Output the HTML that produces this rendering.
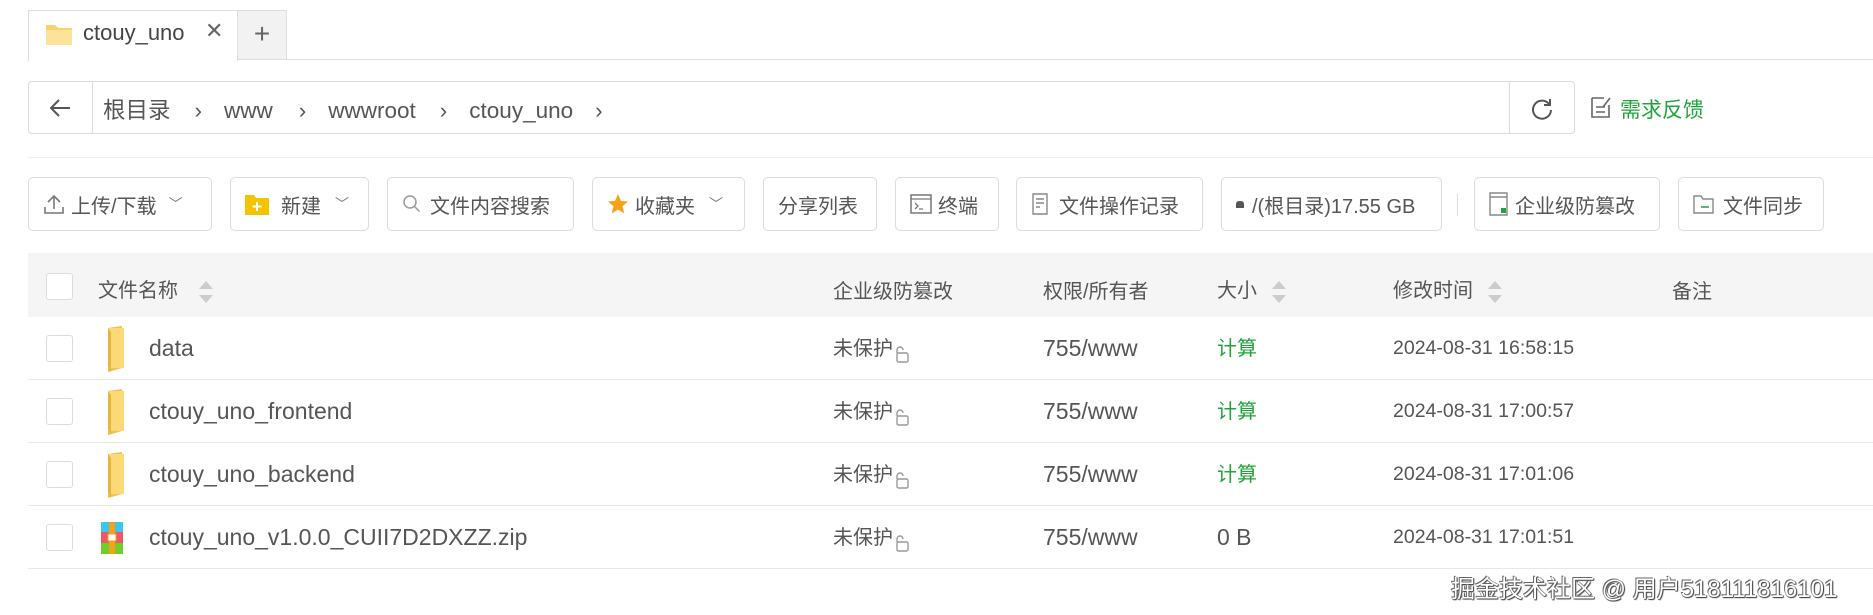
<!DOCTYPE html>
<html><head><meta charset="utf-8"><style>
*{box-sizing:border-box;margin:0;padding:0}
body{width:1873px;height:615px;background:#fff;position:relative;overflow:hidden;font-family:"Liberation Sans","Noto Sans CJK SC",sans-serif;color:#555;font-size:20px}
.a{position:absolute}
.btn{position:absolute;top:177px;height:54px;border:1px solid #dcdcdc;border-radius:5px;display:flex;align-items:center;padding-left:14px;color:#555;font-size:20px;white-space:nowrap}
.cb{position:absolute;left:46px;width:27px;height:27px;border:1px solid #dcdcdc;border-radius:3px;background:#fff}
.row{position:absolute;left:28px;width:1845px;height:63px;border-bottom:1px solid #e8e8e8}
.t{position:absolute;top:0;height:63px;display:flex;align-items:center;white-space:nowrap;line-height:1}
.n{font-size:23px}
.d{font-size:19.5px}
.sort{display:inline-block;vertical-align:middle;margin-left:14px}
</style></head><body>
<div class="a" style="left:28px;top:10px;width:210px;height:51px;border:1px solid #ddd;border-bottom:none;background:#fff"></div>
<div class="a" style="left:237px;top:10px;width:50px;height:50px;border:1px solid #ddd;background:#f2f2f2;text-align:center;line-height:46px;font-size:28px;color:#666">+</div>
<div class="a" style="left:287px;top:59px;width:1586px;height:1px;background:#ddd"></div>
<svg class="a" style="left:45px;top:22px" width="28" height="24"><path d="M1 3h9l3 3h14v17H1z" fill="#f7d36a"/><path d="M1 8h26v15H1z" fill="#fbe39a"/></svg>
<div class="a" style="left:83px;top:20px;font-size:22px;color:#444">ctouy_uno</div>
<div class="a" style="left:205px;top:18px;font-size:22px;color:#666">✕</div>
<div class="a" style="left:28px;top:81px;width:1547px;height:53px;border:1px solid #dcdcdc;border-radius:4px"></div>
<div class="a" style="left:92px;top:81px;width:1px;height:53px;background:#dcdcdc"></div>
<div class="a" style="left:1509px;top:81px;width:1px;height:53px;background:#dcdcdc"></div>
<svg class="a" style="left:48px;top:97px" width="24" height="22"><path d="M22 11H3M11 3l-8 8 8 8" stroke="#555" stroke-width="2" fill="none"/></svg>
<div class="a" style="left:103px;top:93px;font-size:22.5px;color:#555">根目录<span style="margin:0 22px 0 24px">›</span>www<span style="margin:0 22px 0 26px">›</span>wwwroot<span style="margin:0 22px 0 24px">›</span>ctouy_uno<span style="margin-left:22px">›</span></div>
<svg class="a" style="left:1530px;top:97px" width="24" height="24"><path d="M19 7A9 9 0 1 0 21 13" stroke="#555" stroke-width="2" fill="none"/><path d="M20 2v6h-6" stroke="#555" stroke-width="2" fill="none"/></svg>
<svg class="a" style="left:1590px;top:95px" width="22" height="24"><path d="M2 3h12M2 3v19h17V10M6 12h9M6 17h9" stroke="#666" stroke-width="1.6" fill="none"/><path d="M13 12l7-9" stroke="#666" stroke-width="1.6"/></svg>
<div class="a" style="left:1620px;top:94px;font-size:21px;color:#20a53a">需求反馈</div>
<div class="a" style="left:28px;top:157px;width:1845px;height:1px;background:#eee"></div>
<div class="btn" style="left:28px;width:184px"><svg width="22" height="22" style="margin-right:6px"><path d="M11 16V3M5 9l6-6 6 6M2 14v6h18v-6" stroke="#777" stroke-width="1.6" fill="none"/></svg>上传/下载<span style="margin-left:12px;font-size:14px;color:#777">﹀</span></div>
<div class="btn" style="left:230px;width:139px"><svg width="24" height="22" style="margin-right:12px"><path d="M0 2h9l2 3h13v17H0z" fill="#f5c400"/><path d="M12 9v9M7.5 13.5h9" stroke="#fff" stroke-width="2"/></svg>新建<span style="margin-left:14px;font-size:14px;color:#777">﹀</span></div>
<div class="btn" style="left:387px;width:187px"><svg width="20" height="20" style="margin-right:8px"><circle cx="8" cy="8" r="6" stroke="#999" stroke-width="1.5" fill="none"/><path d="M12.5 12.5l5 5" stroke="#999" stroke-width="1.5"/></svg>文件内容搜索</div>
<div class="btn" style="left:592px;width:153px"><svg width="22" height="22" style="margin-right:6px"><path d="M11 1l3 7 7 .5-5.5 4.7 1.8 7.3L11 16.6 4.7 20.5l1.8-7.3L1 8.5 8 8z" fill="#f7a11a"/></svg>收藏夹<span style="margin-left:14px;font-size:14px;color:#777">﹀</span></div>
<div class="btn" style="left:763px;width:114px">分享列表</div>
<div class="btn" style="left:895px;width:104px"><svg width="22" height="20" style="margin-right:6px"><rect x="1" y="1" width="20" height="18" stroke="#777" stroke-width="1.5" fill="none"/><path d="M1 5h20M5 9l3 3-3 3M9 15h4" stroke="#777" stroke-width="1.3" fill="none"/></svg>终端</div>
<div class="btn" style="left:1016px;width:187px"><svg width="20" height="22" style="margin-right:8px"><path d="M2 1h14v20H2zM5 6h8M5 10h8M5 14h4" stroke="#888" stroke-width="1.4" fill="none"/></svg>文件操作记录</div>
<div class="btn" style="left:1221px;width:221px"><span style="display:inline-block;width:8px;height:7px;background:#555;border-radius:3px 3px 0 0;margin-right:8px"></span>/(根目录)17.55 GB</div>
<div class="a" style="left:1457px;top:194px;width:1px;height:22px;background:#ddd"></div>
<div class="btn" style="left:1474px;width:186px"><svg width="20" height="24" style="margin-right:6px"><path d="M1 1h17v22H1zM1 5h17" stroke="#888" stroke-width="1.4" fill="none"/><rect x="12" y="16" width="5" height="5" fill="#20a53a"/></svg>企业级防篡改</div>
<div class="btn" style="left:1678px;width:146px"><svg width="22" height="20" style="margin-right:8px"><path d="M1 2h7l2 3h10v14H1z" stroke="#888" stroke-width="1.4" fill="none"/><path d="M8 13h8" stroke="#20a53a" stroke-width="1.5"/></svg>文件同步</div>
<div class="a" style="left:28px;top:253px;width:1845px;height:64px;background:#f5f5f5"></div>
<div class="cb" style="top:273px"></div>
<svg width="0" height="0" style="position:absolute"><defs><g id="s"><path d="M8 0l7 8H1z M8 22l7-8H1z" fill="#ccc"/></g></defs></svg>
<div class="a" style="left:98px;top:274px">文件名称<svg class="sort" width="16" height="22" style="margin-left:20px"><use href="#s"/></svg></div>
<div class="a" style="left:833px;top:275px">企业级防篡改</div>
<div class="a" style="left:1043px;top:275px">权限/所有者</div>
<div class="a" style="left:1217px;top:274px">大小<svg class="sort" width="16" height="22"><use href="#s"/></svg></div>
<div class="a" style="left:1393px;top:274px">修改时间<svg class="sort" width="16" height="22"><use href="#s"/></svg></div>
<div class="a" style="left:1672px;top:275px">备注</div>
<svg width="0" height="0" style="position:absolute"><defs>
<g id="f"><path d="M3 2l14-2v42L3 46z" fill="#f1c04e"/><path d="M3 2h16v40H3z" fill="#fbd977"/><path d="M3 40l3 6V6L3 2z" fill="#e9b53c"/></g>
<g id="l"><path d="M4 8V5a3 3 0 0 1 6 0" stroke="#999" stroke-width="1.4" fill="none"/><rect x="4" y="8" width="11" height="9" rx="1.5" stroke="#999" stroke-width="1.4" fill="none"/></g>
</defs></svg>
<div class="row" style="top:317px"><div class="cb" style="left:18px;top:18px"></div><svg class="a" style="left:77px;top:9px" width="22" height="46"><use href="#f"/></svg><div class="t n" style="left:121px">data</div><div class="t" style="left:805px">未保护<svg width="18" height="18" style="margin-top:10px"><use href="#l"/></svg></div><div class="t n" style="left:1015px">755/www</div><div class="t" style="left:1189px;color:#20a53a">计算</div><div class="t d" style="left:1365px">2024-08-31 16:58:15</div></div>
<div class="row" style="top:380px"><div class="cb" style="left:18px;top:18px"></div><svg class="a" style="left:77px;top:9px" width="22" height="46"><use href="#f"/></svg><div class="t n" style="left:121px">ctouy_uno_frontend</div><div class="t" style="left:805px">未保护<svg width="18" height="18" style="margin-top:10px"><use href="#l"/></svg></div><div class="t n" style="left:1015px">755/www</div><div class="t" style="left:1189px;color:#20a53a">计算</div><div class="t d" style="left:1365px">2024-08-31 17:00:57</div></div>
<div class="row" style="top:443px"><div class="cb" style="left:18px;top:18px"></div><svg class="a" style="left:77px;top:9px" width="22" height="46"><use href="#f"/></svg><div class="t n" style="left:121px">ctouy_uno_backend</div><div class="t" style="left:805px">未保护<svg width="18" height="18" style="margin-top:10px"><use href="#l"/></svg></div><div class="t n" style="left:1015px">755/www</div><div class="t" style="left:1189px;color:#20a53a">计算</div><div class="t d" style="left:1365px">2024-08-31 17:01:06</div></div>
<div class="row" style="top:506px"><div class="cb" style="left:18px;top:18px"></div><svg class="a" style="left:73px;top:16px" width="22" height="32"><rect width="22" height="10" fill="#3cc6ee"/><rect y="10" width="22" height="11" fill="#f0566a"/><rect y="21" width="22" height="11" fill="#6fcf2a"/><rect x="8" width="6" height="32" fill="#f7a11a"/><rect x="7" y="12" width="8" height="7" fill="#fff" stroke="#f7a11a"/></svg><div class="t n" style="left:121px">ctouy_uno_v1.0.0_CUII7D2DXZZ.zip</div><div class="t" style="left:805px">未保护<svg width="18" height="18" style="margin-top:10px"><use href="#l"/></svg></div><div class="t n" style="left:1015px">755/www</div><div class="t n" style="left:1189px">0 B</div><div class="t d" style="left:1365px">2024-08-31 17:01:51</div></div>
<div class="a" style="left:1451px;top:569px;font-size:24px;color:#fff;text-shadow:-1px -1px 0 #666,1px 1px 1px #444,1px 0 0 #777,0 1px 0 #777;white-space:nowrap">掘金技术社区 @ 用户518111816101</div>
</body></html>
